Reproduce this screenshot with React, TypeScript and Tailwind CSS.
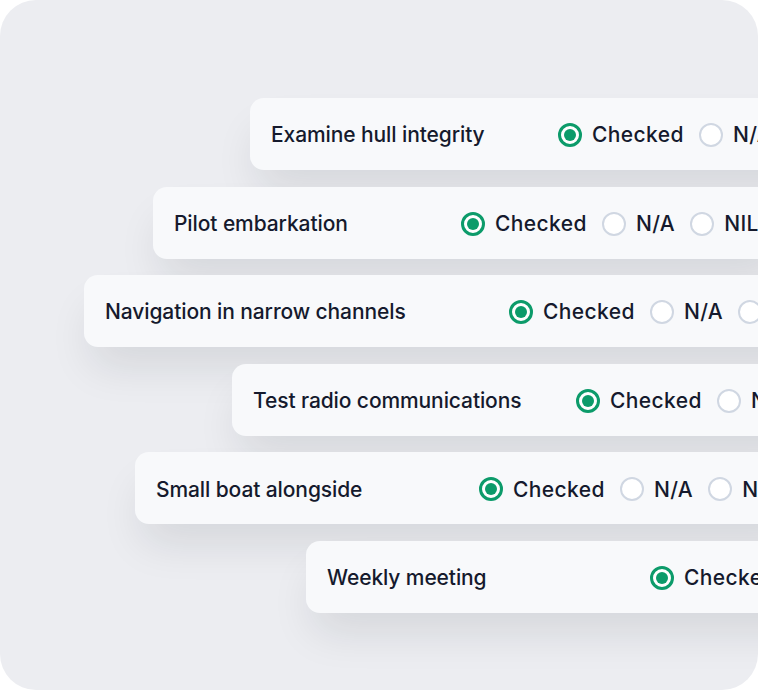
import { useState } from "react";

type Row = {
  label: string;
  offset: string;
  labelWidth: string;
};

const rows: Row[] = [
  { label: "Examine hull integrity", offset: "ml-[250px]", labelWidth: "w-[287px]" },
  { label: "Pilot embarkation", offset: "ml-[153px]", labelWidth: "w-[287px]" },
  { label: "Navigation in narrow channels", offset: "ml-[84px]", labelWidth: "w-[404px]" },
  { label: "Test radio communications", offset: "ml-[232px]", labelWidth: "w-[323px]" },
  { label: "Small boat alongside", offset: "ml-[135px]", labelWidth: "w-[323px]" },
  { label: "Weekly meeting", offset: "ml-[306px]", labelWidth: "w-[323px]" },
];

const options = ["Checked", "N/A", "NIL"];

const Radio = ({ checked }: { checked: boolean }) =>
  checked ? (
    <span className="flex h-6 w-6 shrink-0 items-center justify-center rounded-full border-[3px] border-[#0C9B6A] bg-white">
      <span className="h-3 w-3 rounded-full bg-[#0C9B6A]" />
    </span>
  ) : (
    <span className="h-6 w-6 shrink-0 rounded-full border-[2.5px] border-[#D0D7E2] bg-white" />
  );

export default function App() {
  // every row starts on "Checked"
  const [values, setValues] = useState<string[]>(rows.map(() => "Checked"));

  return (
    <div className="h-[690px] w-[758px] bg-white">
      <div className="h-full w-full overflow-hidden rounded-[36px] bg-[#ECEDF1] pt-[98px]">
        <div className="flex flex-col gap-[16.6px]">
          {rows.map((row, i) => (
            <div
              key={row.label}
              className={`${row.offset} flex h-[72px] w-max items-center rounded-[14px] bg-[#F8F9FB] pl-[21px] pr-8 pt-[2px] shadow-[0_26px_44px_-8px_rgba(20,24,40,0.11)]`}
            >
              <span
                className={`${row.labelWidth} shrink-0 text-[21px] font-medium tracking-[-0.1px] text-[#151A2D]`}
                style={{ fontFamily: "Inter, 'Noto Sans', sans-serif" }}
              >
                {row.label}
              </span>
              <div className="flex items-center gap-[15px]">
                {options.map((opt) => (
                  <button
                    key={opt}
                    onClick={() =>
                      setValues((prev) => prev.map((v, j) => (j === i ? opt : v)))
                    }
                    className="flex items-center gap-[10px]"
                  >
                    <Radio checked={values[i] === opt} />
                    <span
                      className="text-[21px] font-medium tracking-[0.4px] text-[#151A2D]"
                      style={{ fontFamily: "Inter, 'Noto Sans', sans-serif" }}
                    >
                      {opt}
                    </span>
                  </button>
                ))}
              </div>
            </div>
          ))}
        </div>
      </div>
    </div>
  );
}
